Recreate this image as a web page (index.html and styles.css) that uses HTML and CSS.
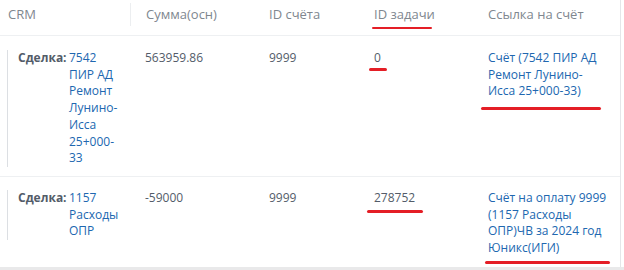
FILE: index.html
```html
<!DOCTYPE html>
<html lang="ru">
<head>
<meta charset="utf-8">
<link rel="stylesheet" href="styles.css">
</head>
<body>
<div class="page">
  <div class="table">
    <div class="row head">
      <div class="th first">CRM</div>
      <div class="th sep">Сумма(осн)</div>
      <div class="th">ID счёта</div>
      <div class="th marked"><span>ID задачи</span><i class="mark mark-h"></i></div>
      <div class="th">Ссылка на счёт</div>
    </div>
    <div class="row body r1">
      <div class="td first">
        <div class="entity">
          <span class="label">Сделка:</span>
          <a class="link deal" href="#">7542 ПИР АД Ремонт Лунино-Исса 25+000-<wbr>33</a>
        </div>
      </div>
      <div class="td num">563959.86</div>
      <div class="td num">9999</div>
      <div class="td num marked">0<i class="mark mark-0"></i></div>
      <div class="td marked"><a class="link inv" href="#">Счёт (7542 ПИР АД Ремонт Лунино-<br>Исса 25+000-33)</a><i class="mark mark-l1"></i></div>
    </div>
    <div class="row body r2">
      <div class="td first">
        <div class="entity">
          <span class="label">Сделка:</span>
          <a class="link deal" href="#">1157 Расходы ОПР</a>
        </div>
      </div>
      <div class="td num">-59000</div>
      <div class="td num">9999</div>
      <div class="td num marked">278752<i class="mark mark-t"></i></div>
      <div class="td marked"><a class="link inv" href="#">Счёт на оплату 9999 (1157 Расходы ОПР)ЧВ за 2024 год Юникс(ИГИ)</a><i class="mark mark-l2"></i></div>
    </div>
  </div>
  <div class="scrollbar"></div>
</div>
</body>
</html>
```

FILE: styles.css
```css
* { box-sizing: border-box; }
html, body { margin: 0; padding: 0; background: #fff; }
body {
  font-family: "Open Sans", "Noto Sans", sans-serif;
  font-size: 12px;
  line-height: 16.7px;
  color: #535c69;
}
.page { width: 624px; height: 270px; overflow: hidden; }
.table {
  width: 621px;
  height: 267px;
  border-right: 1px solid #e4e6e9;
}
.row {
  display: grid;
  grid-template-columns: 130px 124px 105px 114px 1fr;
}
.head {
  height: 36px;
  border-bottom: 1px solid #eef0f2;
  color: #80878f;
  font-size: 13px;
}
.th { padding: 6px 0 0 15px; }
.th.first { padding-left: 8px; }
.th.sep {
  margin-top: 3px;
  height: 23px;
  padding-top: 3px;
  border-left: 1px solid #eceef0;
}
.body { border-bottom: 1px solid #eef0f2; }
.r1 { padding: 14px 0 9px; }
.r2 { padding: 13px 0 9px; border-bottom: none; }
.td { padding-left: 15px; }
.td.first { padding-left: 7px; }
.entity {
  display: flex;
  align-items: flex-start;
  border-left: 1px solid #dcdfe3;
  padding-left: 10px;
}
.label {
  flex: 0 0 51px;
  font-weight: 700;
  color: #535c69;
}
.link { color: #2067b0; text-decoration: none; }
.deal { width: 52px; display: block; }
.inv { display: block; width: 122px; }
.marked { position: relative; }
.mark {
  position: absolute;
  height: 3px;
  background: #e41e26;
  border-radius: 2px;
}
.mark-h { left: 13px; top: 26.5px; width: 60px; height: 2.5px; }
.mark-0 { left: 10px; top: 18px; width: 18px; }
.mark-l1 { left: 8px; top: 57px; width: 120px; }
.mark-t { left: 8px; top: 20px; width: 56px; }
.mark-l2 { left: 12px; top: 71px; width: 125px; }
.scrollbar {
  height: 3px;
  background: #e9e9ea;
}
```
